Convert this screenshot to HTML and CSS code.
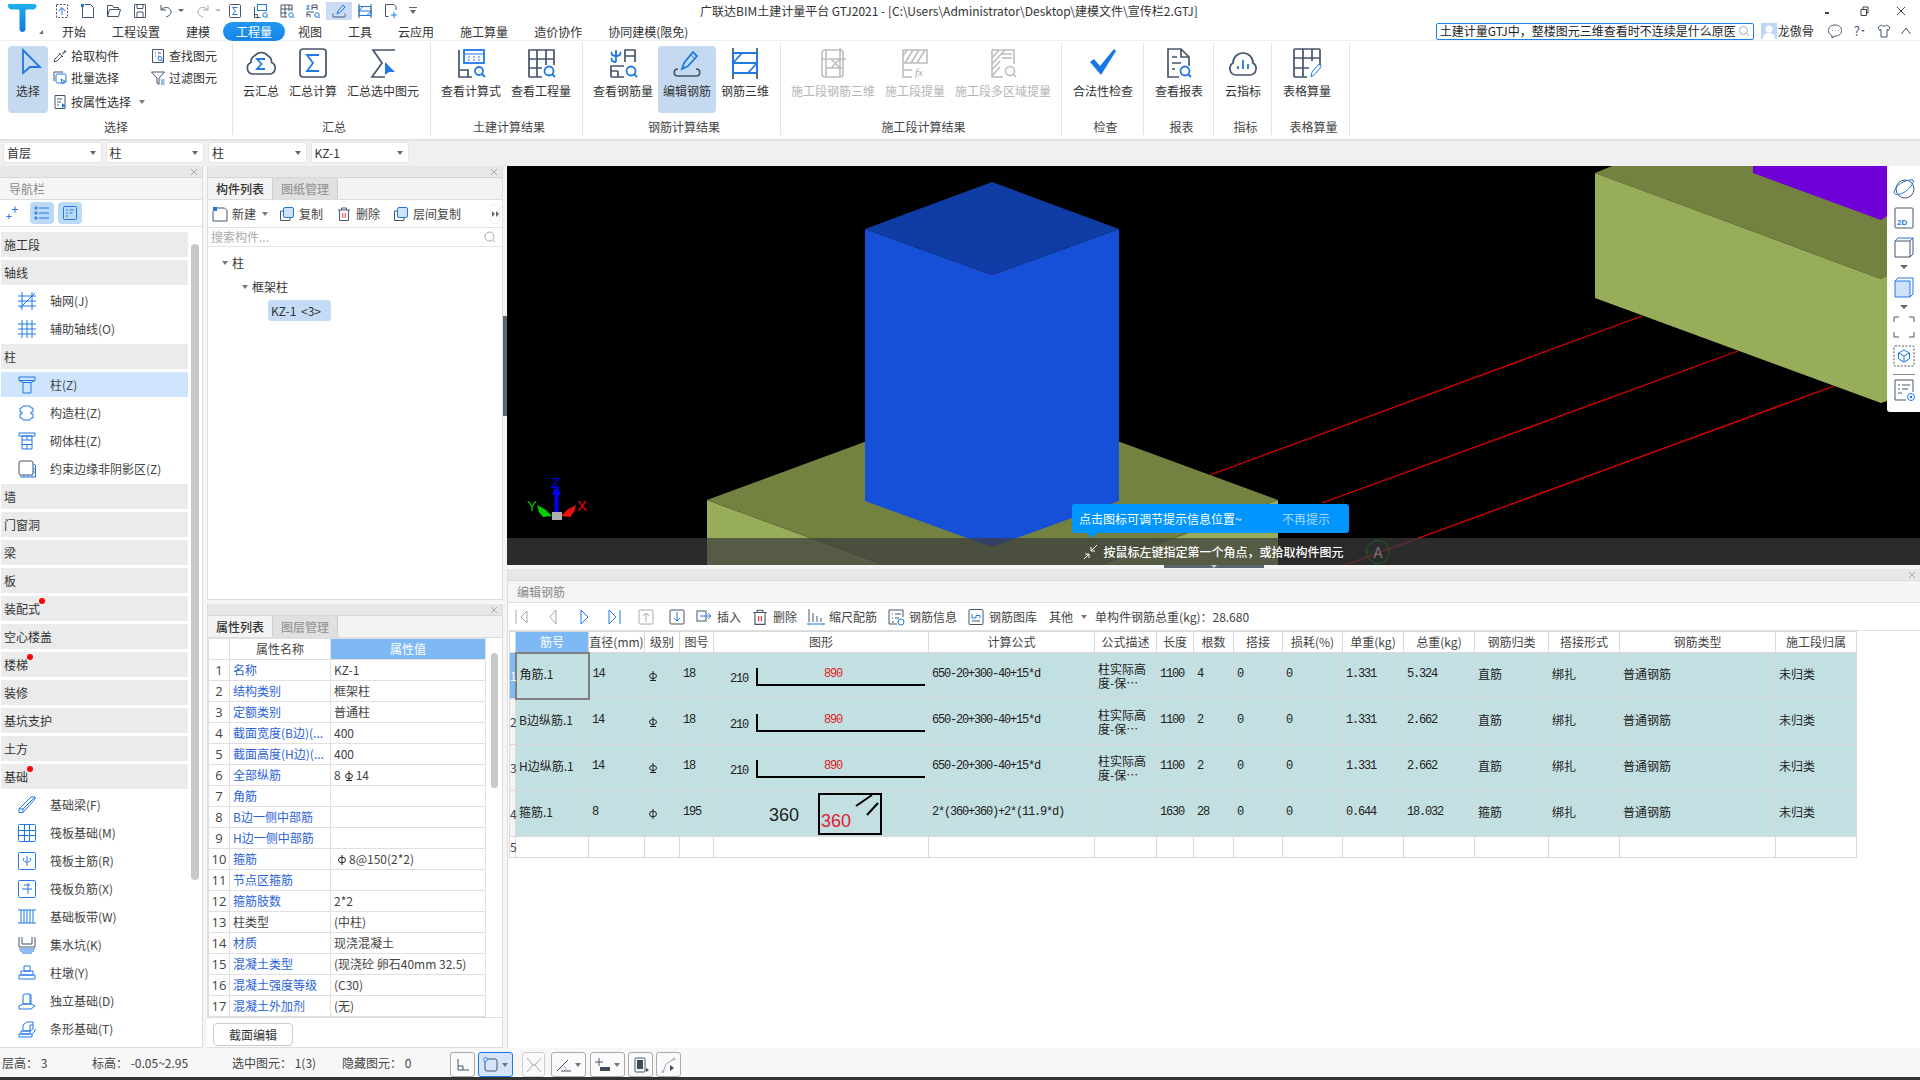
FILE: index.html
```html
<!DOCTYPE html>
<html lang="zh-CN">
<head>
<meta charset="utf-8">
<title>广联达BIM土建计量平台 GTJ2021</title>
<link rel="stylesheet" href="styles.css">
</head>
<body>
<svg class="defs" width="0" height="0">
  <symbol id="trash" viewBox="0 0 16 16"><path class="d" d="M2 4h12M5.500 4V2h5v2M3.500 4v10.500h9V4"/><path class="r" d="M6.800 7v5M9.200 7v5"/></symbol>
  <symbol id="copy" viewBox="0 0 16 16"><path class="d" d="M4 5H1.500v9.500H11V12"/><rect class="bf" x="4.500" y="1.500" width="10" height="10" rx="1.500"/></symbol>
  <symbol id="g3" viewBox="0 0 10 12"><path class="k" d="M5 1v10M2 10.500h6"/><ellipse class="k" cx="5" cy="6" rx="3.500" ry="2.500"/></symbol>
  <symbol id="g1" viewBox="0 0 10 12"><path class="k" d="M5 1v10"/><ellipse class="k" cx="5" cy="6" rx="3.500" ry="2.800"/></symbol>
</svg>
<header class="top">
  <div class="logo-cell">
    <svg width="32" height="30" viewBox="0 0 32 30"><defs><linearGradient id="tg" x1="0" y1="0" x2="0" y2="1"><stop offset="0" stop-color="#1fb1ee"/><stop offset="1" stop-color="#1278e0"/></linearGradient></defs><path fill="url(#tg)" d="M2 1h25c2 0 3 1 2.500 2.500S28 6.500 26 6.500h-6c-1 0-1.500.5-1.500 2v17c0 2-1 3.500-3 3.500s-3-1.500-3-3.500v-17c0-1.500-.5-2-1.500-2H5C3 6.500 1 5 1 3s0-2 1-2z"/></svg>
    <span class="logo-tri"></span>
  </div>
  <div class="top-right">
    <div class="title-row">
      <div class="qa">
        <span class="qs"><svg class="i16" viewBox="0 0 16 16"><rect class="d dash" x="2.500" y="1.500" width="11" height="13"/><path class="bs" d="M8 12V5M5 8l3-3.500L11 8"/></svg></span>
        <span class="qs"><svg class="i16" viewBox="0 0 16 16"><path class="d" d="M5 1.500h5.500l3 3v10h-11V4"/><rect class="bf0" x="1" y="1" width="3" height="3"/></svg></span>
        <span class="qs"><svg class="i16" viewBox="0 0 16 16"><path class="d" d="M1.500 13.500v-11h5l1 2h5v2M1.500 13.500h11l2-7h-11z"/></svg></span>
        <span class="qs"><svg class="i16" viewBox="0 0 16 16"><path class="d" d="M3 1.500h10a.500.500 0 0 1 .500.500v12a.500.500 0 0 1-.500.500H3a.500.500 0 0 1-.500-.500V2a.500.500 0 0 1 .500-.500zM5 1.500v4h6v-4M5 14v-5h6v5"/></svg></span>
        <span class="qs"><svg class="i16" viewBox="0 0 16 16"><path class="d" d="M3 2v5h5M3 7c2-3 9-4 10 1 .5 3-2 5-5 6"/></svg></span>
        <span class="qa-arrow"></span>
        <span class="qs"><svg class="i16" viewBox="0 0 16 16"><path class="g" d="M13 2v5H8M13 7c-2-3-9-4-10 1-.5 3 2 5 5 6"/></svg></span>
        <span class="qa-arrow qa-arrow-g"></span>
        <span class="qs"><svg class="i16" viewBox="0 0 16 16"><rect class="d" x="2.500" y="1.500" width="11" height="13" rx="1"/><path class="bs" d="M10.500 4.500h-5l3 3.500-3 3.500h5"/></svg></span>
        <span class="qs"><svg class="i16" viewBox="0 0 16 16"><path class="d" d="M1.500 4v10.500h6M1.500 11.500h3v3"/><rect class="bs" x="4.500" y="1.500" width="9" height="6"/><circle class="bs" cx="12" cy="12" r="2.200"/><path class="bs" d="M13.500 13.500L15 15"/></svg></span>
        <span class="qs"><svg class="i16" viewBox="0 0 16 16"><path class="d" d="M2 14V2h11v6M6 2v12M10 2v6M2 6h11M2 10h6M2 14h6"/><circle class="bs" cx="12" cy="12" r="2.200"/><path class="bs" d="M13.500 13.500L15 15"/></svg></span>
        <span class="qs"><svg class="i16" viewBox="0 0 16 16"><path class="bs" d="M3 2v5M1.500 3h3M1.500 6h3"/><path class="d" d="M7 7V2h5v5M7 4.500h5M2 14V9h7M2 11.500h3M5 11.500V14"/><circle class="bs" cx="12" cy="12" r="2.200"/><path class="bs" d="M13.500 13.500L15 15"/></svg></span>
        <span class="qs qs-on"><svg class="i16" viewBox="0 0 16 16"><path class="d" d="M3 11c-2 0-2 3 0 3h10c2 0 2-3 0-3"/><path class="bs" d="M6 11l1-3 5-6 2 2-5 5.500z"/></svg></span>
        <span class="qs"><svg class="i16" viewBox="0 0 16 16"><path class="d" d="M2 1v14M14 1v14"/><path class="bs" d="M2 3.500h12v9H2zM2 8h12M2 8l4-4.500M10 12.500l4-4.500"/></svg></span>
        <span class="qs"><svg class="i16" viewBox="0 0 16 16"><path class="d" d="M8 1.500H2.500v12h3M8 1.500h3l2 2V7"/><path class="bs" d="M11 9v6M8 12h6"/></svg></span>
        <span class="qa-more"></span>
      </div>
      <div class="app-title">广联达BIM土建计量平台 GTJ2021 - [C:\Users\Administrator\Desktop\建模文件\宣传栏2.GTJ]</div>
      <div class="win">
        <svg class="i10" viewBox="0 0 10 10"><path class="w2" d="M3 7h4"/></svg>
        <svg class="i10" viewBox="0 0 10 10"><path class="w" d="M2 3.500h5.500v6H2zM4 3.500V1h5v6H7.500"/></svg>
        <svg class="i10" viewBox="0 0 10 10"><path class="w" d="M1 1l8 8M9 1l-8 8"/></svg>
      </div>
    </div>
    <div class="tab-row">
      <nav class="tabs">
        <span class="tab">开始</span><span class="tab">工程设置</span><span class="tab">建模</span><span class="tab tab-on">工程量</span><span class="tab">视图</span><span class="tab">工具</span><span class="tab">云应用</span><span class="tab">施工算量</span><span class="tab">造价协作</span><span class="tab">协同建模(限免)</span>
      </nav>
      <div class="user">
        <div class="search-top"><span class="search-txt">土建计量GTJ中，整楼图元三维查看时不连续是什么原医</span><svg class="i12" viewBox="0 0 12 12"><circle class="g" cx="5.500" cy="5.500" r="4"/><path class="g" d="M8.500 8.500L11 11"/></svg></div>
        <svg class="avatar" viewBox="0 0 16 16"><rect width="16" height="16" fill="#bcd6f6"/><circle cx="8" cy="6" r="3.500" fill="#fff"/><path d="M2 16c0-5 3-6 6-6s6 1 6 6z" fill="#fff"/></svg>
        <span class="uname">龙傲骨</span>
        <svg class="i16 u1" viewBox="0 0 16 16"><path class="d" d="M8 2c4 0 6.500 2 6.500 5.500S12 13 8 13l-3 2v-2.500C2.500 11.500 1.500 10 1.500 7.500 1.500 4 4 2 8 2zM5 7.500h.5M8 7.500h.5M11 7.500h.5"/></svg>
        <span class="help">?<i></i></span>
        <svg class="i16" viewBox="0 0 16 16"><path class="d" d="M5.500 2L2 4.500l1.500 3 1.500-1V14h6V6.500l1.500 1 1.500-3L10.500 2c-1 1.500-4 1.500-5 0z"/></svg>
        <svg class="i12 u2" viewBox="0 0 12 12"><path class="d" d="M1.500 9L6 3l4.500 6"/></svg>
      </div>
    </div>
  </div>
</header>

<section class="ribbon">
  <div class="grp g-select">
    <div class="btns">
      <div class="big big-select on">
        <svg class="i32" viewBox="0 0 32 32"><path class="bs2" d="M11 3v23l7-6 10 0z"/></svg>
        <span>选择</span>
      </div>
      <div class="scol scol1">
        <div class="srow"><svg class="i16" viewBox="0 0 16 16"><path class="d" d="M2 14l1-3 5-5 2 2-5 5zM7 5l4 4"/><path class="dk" d="M10 6l3-4 1.500 1.500-4 3z"/></svg><span>拾取构件</span></div>
        <div class="srow"><svg class="i16" viewBox="0 0 16 16"><path class="d" d="M2 11V2h9"/><rect class="bs" x="4" y="4" width="10" height="9" rx="1.500"/><path class="bs" d="M9 9l1.500 5 1-2 2-.500z"/></svg><span>批量选择</span></div>
        <div class="srow srow-3"><svg class="i16" viewBox="0 0 16 16"><path class="d" d="M3 1.500h10v13H3zM5 5h5M5 8h4M5 11h2"/><path class="bf0" d="M10 9v5l1.500-1.200L14 12z"/></svg><span>按属性选择</span><i class="arw"></i></div>
      </div>
      <div class="scol">
        <div class="srow"><svg class="i16" viewBox="0 0 16 16"><path class="d" d="M2.500 1.500h11v13h-11zM5 5h1M8 5h3M5 8h1M8 8h1"/><circle class="bs" cx="10" cy="10.500" r="2"/><path class="bs" d="M11.500 12l2 2"/></svg><span>查找图元</span></div>
        <div class="srow"><svg class="i16" viewBox="0 0 16 16"><path class="d" d="M1.500 2h13L9 8v6.500L7 13V8z"/><path class="bs" d="M11 10h3.500M11 12h3.500M11 14h3.500"/></svg><span>过滤图元</span></div>
      </div>
    </div>
    <div class="glabel">选择</div>
  </div>

  <div class="grp g-sum">
    <div class="btns">
      <div class="big"><svg class="i32" viewBox="0 0 32 32"><path class="dm" d="M8 27a6 6 0 0 1-2-11.500 7 7 0 0 1 4-7 8 8 0 0 1 12.500 0 7 7 0 0 1 4 7 6 6 0 0 1-2 11.500z"/><path class="bs2" d="M20 12h-8l4.500 5-4.500 5h8"/></svg><span>云汇总</span></div>
      <div class="big"><svg class="i32" viewBox="0 0 32 32"><rect class="dm" x="3" y="2" width="26" height="28" rx="3"/><path class="bs2" d="M22 8H10l6 8-6 8h12"/></svg><span>汇总计算</span></div>
      <div class="big"><svg class="i32" viewBox="0 0 32 32"><path class="dm" d="M28 3H6l9 13-10 14h13"/><path class="bf0" d="M18 15v13l4-3 6 0z"/></svg><span>汇总选中图元</span></div>
    </div>
    <div class="glabel">汇总</div>
  </div>

  <div class="grp g-civil">
    <div class="btns">
      <div class="big"><svg class="i32" viewBox="0 0 32 32"><path class="dm" d="M4 3v27h13M4 23h9v7"/><rect class="bs2" x="9" y="3" width="20" height="13"/><path class="bs" d="M9 7h20M13 10h2M18 10h2M23 10h2M13 13h2M18 13h2M23 13h2"/><circle class="bs2" cx="24" cy="24" r="4"/><path class="bs2" d="M27 27l3 3"/></svg><span>查看计算式</span></div>
      <div class="big"><svg class="i32" viewBox="0 0 32 32"><path class="dm" d="M4 30V3h25v15M4 12h25M4 21h13M4 30h13M12 3v27M21 3v15"/><circle class="bs2" cx="24" cy="24" r="4.500"/><path class="bs2" d="M27 27l3 3"/></svg><span>查看工程量</span></div>
    </div>
    <div class="glabel">土建计算结果</div>
  </div>

  <div class="grp g-rebar">
    <div class="btns">
      <div class="big"><svg class="i32" viewBox="0 0 32 32"><path class="bs2" d="M9 3v12M5 5c-2 3 2 4 4 4s6-1 4-4M5 11c-2 3 2 4 4 4"/><path class="dm" d="M18 15V3h10v12M18 9h10M4 30V19h13M4 24h7M11 24v6M4 30h13"/><circle class="bs2" cx="24" cy="24" r="4.500"/><path class="bs2" d="M27 27l3 3"/></svg><span>查看钢筋量</span></div>
      <div class="big on"><svg class="i32" viewBox="0 0 32 32"><path class="dm" d="M7 22c-5 0-5 7 0 7h18c5 0 5-7 0-7"/><path class="bs2" d="M11 22l2-6L22 5l4 4-9 10z"/><path class="bs" d="M20 8l4 4"/></svg><span>编辑钢筋</span></div>
      <div class="big"><svg class="i32" viewBox="0 0 32 32"><path class="dm" d="M4 1v31M28 1v31"/><path class="bs2" d="M4 6h24v20H4zM4 16h24M4 16l9-10M19 26l9-10"/></svg><span>钢筋三维</span></div>
    </div>
    <div class="glabel">钢筋计算结果</div>
  </div>

  <div class="grp g-stage dis">
    <div class="btns">
      <div class="big"><svg class="i32" viewBox="0 0 32 32"><rect class="gg" x="5" y="3" width="21" height="27" rx="3"/><path class="gg" d="M9 3v27M23 1v29M5 12h24M9 21h17M14 12l9 9M14 21l9-9"/></svg><span>施工段钢筋三维</span></div>
      <div class="big"><svg class="i32" viewBox="0 0 32 32"><path class="gg" d="M4 3h24v13H4zM8 3L4 9M14 3L6 16M20 3l-8 13M26 3l-8 13M4 16v14h9M4 23h9"/><text class="fx" x="16" y="29">fx</text></svg><span>施工段提量</span></div>
      <div class="big"><svg class="i32" viewBox="0 0 32 32"><path class="gg" d="M5 3h22v14M5 3v27h11M12 3L5 11M18 3L5 17M5 23l8-9M5 29l8-9"/><path class="gg" d="M15 7h10M15 11h10"/><circle class="gg" cx="23" cy="24" r="4.500"/><path class="gg" d="M26 27l3 3"/></svg><span>施工段多区域提量</span></div>
    </div>
    <div class="glabel glabel-dk">施工段计算结果</div>
  </div>

  <div class="grp g-check">
    <div class="btns">
      <div class="big"><svg class="i32" viewBox="0 0 32 32"><path fill="#1877e6" d="M3 15l4-3 6 7L27 2l2 2-15 24z"/></svg><span>合法性检查</span></div>
    </div>
    <div class="glabel">检查</div>
  </div>

  <div class="grp g-report">
    <div class="btns">
      <div class="big"><svg class="i32" viewBox="0 0 32 32"><path class="dm" d="M16 30H5V2h13l8 8v9M18 2v8h8M9 10h5M9 16h9M9 22h3"/><circle class="bs2" cx="22" cy="24" r="4.500"/><path class="bs2" d="M25 27l3 3"/></svg><span>查看报表</span></div>
    </div>
    <div class="glabel">报表</div>
  </div>

  <div class="grp g-index">
    <div class="btns">
      <div class="big"><svg class="i32" viewBox="0 0 32 32"><path class="dm" d="M9 28a6.500 6.500 0 0 1-3-12 10 10 0 0 1 20 0 6.500 6.500 0 0 1-3 12z"/><path class="bs2" d="M11 22v-3M16 22v-9M21 22v-5"/></svg><span>云指标</span></div>
    </div>
    <div class="glabel">指标</div>
  </div>

  <div class="grp g-table">
    <div class="btns">
      <div class="big"><svg class="i32" viewBox="0 0 32 32"><path class="dm" d="M3 30V3a1 1 0 0 1 1-1h24a1 1 0 0 1 1 1v15M3 11h26M3 21h15M3 30h13M12 2v28M21 2v12"/><path class="bs" d="M20 30l1-5 7-8 2.500 2.500-7 8z"/></svg><span>表格算量</span></div>
    </div>
    <div class="glabel">表格算量</div>
  </div>
</section>

<section class="combos">
  <div class="combo">首层<i></i></div>
  <div class="combo">柱<i></i></div>
  <div class="combo">柱<i></i></div>
  <div class="combo">KZ-1<i></i></div>
</section>

<main class="main">
  <aside class="left">
    <div class="phead"><svg class="x" viewBox="0 0 8 8"><path d="M1 1l6 6M7 1L1 7"/></svg></div>
    <div class="ptitle">导航栏</div>
    <div class="ltools">
      <svg class="i16" viewBox="0 0 16 16"><path class="bs" d="M10 1.500v6M7 4.500h6M4 9v5M1.500 11.500h5"/></svg>
      <span class="lbtn lbtn-1"><svg class="i16" viewBox="0 0 16 16"><path class="bs" d="M5 3h10M5 8h10M5 13h10M1 2h2v2H1zM1 7h2v2H1zM1 12h2v2H1z"/></svg></span>
      <span class="lbtn"><svg class="i16" viewBox="0 0 16 16"><rect class="bs" x="1.500" y="1.500" width="13" height="13" rx="1"/><path class="bs" d="M4 5h2M7.500 5h4.500M4 8h2M7.500 8h3M4 11h2"/></svg></span>
    </div>
    <div class="nav">
      <div class="sec">施工段</div>
      <div class="sec">轴线</div>
      <div class="it"><svg class="i18" viewBox="0 0 18 18"><path class="bs" d="M0 4h18M0 9h18M0 14h18M4 0v18M14 0v18M2 16L17 1"/></svg>轴网(J)</div>
      <div class="it"><svg class="i18" viewBox="0 0 18 18"><path class="bs" d="M0 4h18M0 9h18M0 14h18M4 0v18M9 0v18M14 0v18"/></svg>辅助轴线(O)</div>
      <div class="sec">柱</div>
      <div class="it it-on"><svg class="i18" viewBox="0 0 18 18"><path class="bs" d="M1 1h16v3.500H1zM1 4.500l4 2v0h8l4-2M5 6.500V17h8V6.500"/></svg>柱(Z)</div>
      <div class="it"><svg class="i18" viewBox="0 0 18 18"><path class="bs" d="M5 2h7l1 2h2v4h-2v2h2v4h-2l-1 2H5l-1-2H2v-4h2V8H2V4h2z"/></svg>构造柱(Z)</div>
      <div class="it"><svg class="i18" viewBox="0 0 18 18"><path class="bs" d="M1 1h16v3H1zM4 4h10v13H4zM4 8h10M4 12.500h10M9 4v4M9 12.500V17"/></svg>砌体柱(Z)</div>
      <div class="it"><svg class="i18" viewBox="0 0 18 18"><rect class="d" x="1" y="1" width="14" height="14" rx="2"/><path class="bs" d="M15.500 4l2 1v12H3l-1-1.500M17 9h-2M17 12h-2M6 17v-2M10 17v-2M14 17v-2"/></svg>约束边缘非阴影区(Z)</div>
      <div class="sec">墙</div>
      <div class="sec">门窗洞</div>
      <div class="sec">梁</div>
      <div class="sec">板</div>
      <div class="sec"><span class="dotted">装配式<b class="dot"></b></span></div>
      <div class="sec">空心楼盖</div>
      <div class="sec"><span class="dotted">楼梯<b class="dot"></b></span></div>
      <div class="sec">装修</div>
      <div class="sec">基坑支护</div>
      <div class="sec">土方</div>
      <div class="sec"><span class="dotted">基础<b class="dot"></b></span></div>
      <div class="it"><svg class="i18" viewBox="0 0 18 18"><path class="bs" d="M1 13L13 1h4v2L5 16.500H1zM1 13h4v3.500M5 13L17 1"/></svg>基础梁(F)</div>
      <div class="it"><svg class="i18" viewBox="0 0 18 18"><rect class="bs" x=".5" y=".5" width="17" height="17" rx="1"/><path class="bs dash2" d="M0 6.500h18M0 11.500h18M6.500 0v18M11.500 0v18"/></svg>筏板基础(M)</div>
      <div class="it"><svg class="i18" viewBox="0 0 18 18"><rect class="bs" x=".5" y=".5" width="17" height="17" rx="1"/><path class="bs" d="M9 4v10M6 6c-2 3 1 4 3 4s5-1 3-4"/></svg>筏板主筋(R)</div>
      <div class="it"><svg class="i18" viewBox="0 0 18 18"><rect class="bs" x=".5" y=".5" width="17" height="17" rx="1"/><path class="bs" d="M4 9h10M6 5h6M10 3v11"/></svg>筏板负筋(X)</div>
      <div class="it"><svg class="i18" viewBox="0 0 18 18"><path class="bs" d="M0 2h18M0 15h18M3 2v13M6 2v13M9 2v13M12 2v13M15 2v13"/></svg>基础板带(W)</div>
      <div class="it"><svg class="i18" viewBox="0 0 18 18"><path class="d" d="M1 1v10h16V1M4 1v7h10V1"/><path class="bs dash3" d="M1 13h16M2 15h14M4 17h10"/></svg>集水坑(K)</div>
      <div class="it"><svg class="i18" viewBox="0 0 18 18"><path class="bs" d="M6 2h6v5H6zM3 7h12v4H3zM1 11h16v4H1z"/></svg>柱墩(Y)</div>
      <div class="it"><svg class="i18" viewBox="0 0 18 18"><path class="bs" d="M5 3l2-1h5v10H5zM12 2l1 1v9M1 14l4-2h8l4 2-4 3H1z"/></svg>独立基础(D)</div>
      <div class="it"><svg class="i18" viewBox="0 0 18 18"><path class="bs" d="M5 5l4-3h6v7l-3 2H5zM12 5h3M12 5v6M3 11h9v3H3zM1 14h13v3H1zM14 14l3-3V9"/></svg>条形基础(T)</div>
    </div>
    <div class="lscroll"></div>
  </aside>

  <div class="mid">
    <div class="comp">
      <div class="phead"><svg class="x" viewBox="0 0 8 8"><path d="M1 1l6 6M7 1L1 7"/></svg></div>
      <div class="ptabs"><span class="ptab on">构件列表</span><span class="ptab">图纸管理</span></div>
      <div class="mtools">
        <span class="mt mt-new"><svg class="i16" viewBox="0 0 16 16"><path class="d" d="M5 2h7.500L15 4.500V15H1V5"/><rect class="bf0" x="1" y="1" width="4" height="4"/></svg>新建<i class="arw"></i></span>
        <span class="mt"><svg class="i16"><use href="#copy"/></svg>复制</span>
        <span class="mt"><svg class="i16"><use href="#trash"/></svg>删除</span>
        <span class="mt"><svg class="i16"><use href="#copy"/></svg>层间复制</span>
        <span class="more"><i></i><i></i></span>
      </div>
      <div class="msearch"><span>搜索构件...</span><svg class="i12" viewBox="0 0 12 12"><circle class="g" cx="5.500" cy="5.500" r="4.500"/><path class="g" d="M9 9l2 2"/></svg></div>
      <div class="tree">
        <div class="t1"><i class="tri"></i>柱</div>
        <div class="t2"><i class="tri"></i>框架柱</div>
        <div class="t3"><span class="pill">KZ-1 &lt;3&gt;</span></div>
      </div>
    </div>
    <div class="props">
      <div class="phead"><svg class="x" viewBox="0 0 8 8"><path d="M1 1l6 6M7 1L1 7"/></svg></div>
      <div class="ptabs"><span class="ptab on">属性列表</span><span class="ptab">图层管理</span></div>
      <div class="ptable-wrap">
        <table class="pt">
          <colgroup><col class="p1"><col class="p2"><col class="p3"></colgroup>
          <thead><tr><th></th><th>属性名称</th><th class="hl">属性值</th></tr></thead>
          <tbody>
            <tr><td class="n">1</td><td class="lk">名称</td><td>KZ-1</td></tr>
            <tr><td class="n">2</td><td class="lk">结构类别</td><td>框架柱</td></tr>
            <tr><td class="n">3</td><td class="lk">定额类别</td><td>普通柱</td></tr>
            <tr><td class="n">4</td><td class="lk">截面宽度(B边)(...</td><td>400</td></tr>
            <tr><td class="n">5</td><td class="lk">截面高度(H边)(...</td><td>400</td></tr>
            <tr><td class="n">6</td><td class="lk">全部纵筋</td><td>8<svg class="sym"><use href="#g3"/></svg>14</td></tr>
            <tr><td class="n">7</td><td class="lk">角筋</td><td></td></tr>
            <tr><td class="n">8</td><td class="lk">B边一侧中部筋</td><td></td></tr>
            <tr><td class="n">9</td><td class="lk">H边一侧中部筋</td><td></td></tr>
            <tr><td class="n">10</td><td class="lk">箍筋</td><td><svg class="sym"><use href="#g1"/></svg>8@150(2*2)</td></tr>
            <tr><td class="n">11</td><td class="lk">节点区箍筋</td><td></td></tr>
            <tr><td class="n">12</td><td class="lk">箍筋肢数</td><td>2*2</td></tr>
            <tr><td class="n">13</td><td>柱类型</td><td>(中柱)</td></tr>
            <tr><td class="n">14</td><td class="lk">材质</td><td>现浇混凝土</td></tr>
            <tr><td class="n">15</td><td class="lk">混凝土类型</td><td>(现浇砼 卵石40mm 32.5)</td></tr>
            <tr><td class="n">16</td><td class="lk">混凝土强度等级</td><td>(C30)</td></tr>
            <tr><td class="n">17</td><td class="lk">混凝土外加剂</td><td>(无)</td></tr>
            <tr><td class="n"></td><td></td><td></td></tr>
          </tbody>
        </table>
        <div class="pscroll"></div>
      </div>
    </div>
    <div class="pfoot"><span class="btn">截面编辑</span></div>
    <div class="splitter"></div>
  </div>

  <div class="right">
    <div class="viewport">
      <svg class="scene" viewBox="507 166 1413 399" width="1413" height="399">
        <path class="red" d="M1210 475L1642 316M1322 503L1738 351M1345 565L1834 386"/>
        <polygon fill="#98ad5a" points="707,500 992,605 1278,500 1278,565 707,565"/>
        <polygon fill="#738240" points="707,500 992,395 1278,500 992,605"/>
        <polygon fill="#1650d8" points="865,229 992,275 1119,229 1119,501 992,547 865,501"/>
        <polygon fill="#103ca6" points="865,229 992,182 1119,229 992,275"/>
        <polygon fill="#738240" points="1612,166 1887,166 1887,276 1881,279 1595,173"/>
        <polygon fill="#98ad5a" points="1595,173 1881,279 1887,276 1887,401 1881,403 1595,298"/>
        <polygon fill="#6f00d8" points="1753,166 1887,166 1887,216 1881,220 1753,173"/>
        <path class="axis-b" d="M556.500 512V492"/>
        <polygon fill="#0000f0" points="552,495 556.500,484 561,495"/>
        <polygon fill="#00d000" points="552,516 546,510 537,505 539,512 543,517"/>
        <polygon fill="#f01010" points="561,516 567,510 576,505 574,512 570,517"/>
        <rect x="552" y="512" width="10" height="8" fill="#b0b0b0"/>
        <text class="ax" x="551" y="488" fill="#0000f0">Z</text>
        <text class="ax" x="527" y="511" fill="#00c000">Y</text>
        <text class="ax" x="577" y="511" fill="#f00000">X</text>
      </svg>
      <div class="hint-bar">
        <svg class="i16" viewBox="0 0 16 16"><path class="w3" d="M8 7l6-6M8 7V3M8 7h4M1 15l5-5M6 10v4M6 10H2"/></svg>
        <span>按鼠标左键指定第一个角点，或拾取构件图元</span>
        <span class="a-mark">A</span>
      </div>
      <div class="tip"><span>点击图标可调节提示信息位置~</span><span class="tip-off">不再提示</span></div>
      <div class="vtools">
        <svg class="i22" viewBox="0 0 22 22"><circle class="d" cx="12" cy="11" r="9"/><path class="bs" d="M1 15C1 8 12 1 20 2c2 2-4 10-10 13-4 2-8 2-9 0z"/></svg>
        <svg class="i22" viewBox="0 0 22 22"><rect class="d" x="2" y="1" width="18" height="20" rx="1"/><text class="t2d" x="4" y="18">2D</text></svg>
        <svg class="i22" viewBox="0 0 22 22"><path class="d" d="M2 5h15v16H2zM17 21l3-3V2"/><path class="bs" d="M2 5l3-3h15l-3 3"/></svg>
        <i class="vdown"></i>
        <svg class="i22" viewBox="0 0 22 22"><path fill="#cfe2fa" stroke="#1f78e6" d="M2 5h15v16H2z"/><path class="bs" d="M2 5l3-3h15v16l-3 3"/></svg>
        <i class="vdown"></i>
        <svg class="i22" viewBox="0 0 22 22"><path class="d" d="M1 6V1h5M16 1h5v5M21 16v5h-5M6 21H1v-5"/></svg>
        <svg class="i22" viewBox="0 0 22 22"><rect class="d dash" x="1" y="1" width="20" height="20" rx="1"/><path class="bs" d="M11 5l5.500 3v6L11 17l-5.500-3V8zM5.500 8L11 11l5.500-3M11 11v6"/></svg>
        <hr class="vsep">
        <svg class="i22" viewBox="0 0 22 22"><path class="d" d="M13 21H2V1h18v12M5 6h2M9 6h8M5 10h2M9 10h6M5 14h4"/><circle class="bs" cx="18" cy="18" r="3.500"/><circle cx="18" cy="18" r="1.300" fill="#1f78e6"/></svg>
      </div>
    </div>
    <div class="vhandle"><i></i></div>
    <div class="rebar">
      <div class="phead"><svg class="x" viewBox="0 0 8 8"><path d="M1 1l6 6M7 1L1 7"/></svg></div>
      <div class="ptitle">编辑钢筋</div>
      <div class="rtools">
        <div class="rnav">
          <svg class="i18" viewBox="0 0 18 18"><path class="g" d="M3 2v14M14 3L8 9l6 6z"/></svg>
          <svg class="i18" viewBox="0 0 18 18"><path class="g" d="M12 2L6 9l6 7z"/></svg>
          <svg class="i18" viewBox="0 0 18 18"><path class="bs" d="M6 2l7 7-7 7z"/></svg>
          <svg class="i18" viewBox="0 0 18 18"><path class="bs" d="M3 2l7 7-7 7zM14 2v14"/></svg>
          <svg class="i18" viewBox="0 0 18 18"><rect class="g" x="2" y="2" width="14" height="14" rx="1"/><path class="g" d="M9 14V5M6 8l3-3 3 3"/></svg>
          <svg class="i18" viewBox="0 0 18 18"><rect class="d" x="2" y="2" width="14" height="14" rx="1"/><path class="bs" d="M9 4v9M6 10l3 3 3-3"/></svg>
        </div>
        <span class="rt"><svg class="i18" viewBox="0 0 18 18"><rect class="d" x="2" y="3" width="9" height="10"/><path class="bs" d="M5 8h11M13 5l3 3-3 3"/></svg>插入</span>
        <span class="rt"><svg class="i18"><use href="#trash"/></svg>删除</span>
        <span class="rt"><svg class="i18" viewBox="0 0 18 18"><path class="d" d="M2 1v13M6 5v9M10 8v6M14 10v4"/><path class="bs" d="M1 16h16M1 15v2M17 15v2"/></svg>缩尺配筋</span>
        <span class="rt"><svg class="i18" viewBox="0 0 18 18"><path class="d" d="M10 16H2V2h14v7M5 6h1M8 6h6M5 10h1M8 10h4M5 14h2"/><circle class="bs" cx="14" cy="14" r="3"/></svg>钢筋信息</span>
        <span class="rt"><svg class="i18" viewBox="0 0 18 18"><rect class="d" x="2" y="1.500" width="14" height="15" rx="1"/><path class="d" d="M5 13h8"/><path class="bs" d="M5 6v4h4M9 10V7.500h4V10"/></svg>钢筋图库</span>
        <span class="rt rt-other">其他<i class="arw"></i></span>
        <span class="rt-total">单构件钢筋总重(kg)：28.680</span>
      </div>
      <div class="rb-wrap">
        <table class="rb">
          <colgroup><col><col><col><col><col><col><col><col><col><col><col><col><col><col><col><col><col><col></colgroup>
          <thead><tr>
            <th></th><th class="hl">筋号</th><th>直径(mm)</th><th>级别</th><th>图号</th><th>图形</th><th>计算公式</th><th>公式描述</th><th>长度</th><th>根数</th><th>搭接</th><th>损耗(%)</th><th>单重(kg)</th><th>总重(kg)</th><th>钢筋归类</th><th>搭接形式</th><th>钢筋类型</th><th>施工段归属</th>
          </tr></thead>
          <tbody>
            <tr class="rw"><td class="gut gut-on">1</td><td class="sel">角筋.1</td><td class="m">14</td><td><svg class="sym2"><use href="#g3"/></svg></td><td class="m">18</td>
              <td class="shape"><svg class="fig" viewBox="0 0 215 45"><text class="f210" x="16" y="29">210</text><path class="bar" d="M43 15v17h168"/><text class="f890" x="110" y="24">890</text></svg></td>
              <td class="m">650-20+300-40+15*d</td><td class="w">柱实际高<br>度-保…</td><td class="m">1100</td><td class="m">4</td><td class="m">0</td><td class="m">0</td><td class="m">1.331</td><td class="m">5.324</td><td class="c">直筋</td><td class="c">绑扎</td><td class="c">普通钢筋</td><td class="c">未归类</td></tr>
            <tr class="rw"><td class="gut">2</td><td>B边纵筋.1</td><td class="m">14</td><td><svg class="sym2"><use href="#g3"/></svg></td><td class="m">18</td>
              <td class="shape"><svg class="fig" viewBox="0 0 215 45"><text class="f210" x="16" y="29">210</text><path class="bar" d="M43 15v17h168"/><text class="f890" x="110" y="24">890</text></svg></td>
              <td class="m">650-20+300-40+15*d</td><td class="w">柱实际高<br>度-保…</td><td class="m">1100</td><td class="m">2</td><td class="m">0</td><td class="m">0</td><td class="m">1.331</td><td class="m">2.662</td><td class="c">直筋</td><td class="c">绑扎</td><td class="c">普通钢筋</td><td class="c">未归类</td></tr>
            <tr class="rw"><td class="gut">3</td><td>H边纵筋.1</td><td class="m">14</td><td><svg class="sym2"><use href="#g3"/></svg></td><td class="m">18</td>
              <td class="shape"><svg class="fig" viewBox="0 0 215 45"><text class="f210" x="16" y="29">210</text><path class="bar" d="M43 15v17h168"/><text class="f890" x="110" y="24">890</text></svg></td>
              <td class="m">650-20+300-40+15*d</td><td class="w">柱实际高<br>度-保…</td><td class="m">1100</td><td class="m">2</td><td class="m">0</td><td class="m">0</td><td class="m">1.331</td><td class="m">2.662</td><td class="c">直筋</td><td class="c">绑扎</td><td class="c">普通钢筋</td><td class="c">未归类</td></tr>
            <tr class="rw"><td class="gut">4</td><td>箍筋.1</td><td class="m">8</td><td><svg class="sym2"><use href="#g1"/></svg></td><td class="m">195</td>
              <td class="shape"><svg class="fig" viewBox="0 0 215 45"><text class="f360" x="55" y="30">360</text><rect class="bar" x="105" y="3" width="62" height="40"/><path class="bar" d="M142 15l16-11M153 24l11-12"/><text class="f360r" x="107" y="36">360</text></svg></td>
              <td class="m">2*(360+360)+2*(11.9*d)</td><td></td><td class="m">1630</td><td class="m">28</td><td class="m">0</td><td class="m">0</td><td class="m">0.644</td><td class="m">18.032</td><td class="c">箍筋</td><td class="c">绑扎</td><td class="c">普通钢筋</td><td class="c">未归类</td></tr>
            <tr class="e"><td class="gut">5</td><td></td><td></td><td></td><td></td><td></td><td></td><td></td><td></td><td></td><td></td><td></td><td></td><td></td><td></td><td></td><td></td><td></td></tr>
          </tbody>
        </table>
      </div>
    </div>
  </div>
</main>

<footer class="status">
  <span class="st st1">层高： 3</span>
  <span class="st st2">标高： -0.05~2.95</span>
  <span class="st st3">选中图元： 1(3)</span>
  <span class="st st4">隐藏图元： 0</span>
  <div class="stools">
    <span class="sb sb-s"><svg class="i16" viewBox="0 0 16 16"><path class="d" d="M3 2v11h11M3 9h5v4"/></svg></span>
    <span class="sb sb-w sb-on"><svg class="i16" viewBox="0 0 16 16"><rect class="d" x="2" y="2" width="12" height="12" rx="2"/><circle cx="2.500" cy="2.500" r="1.800" fill="#fff" stroke="#1f78e6"/></svg><i class="arw"></i></span>
    <span class="sb sb-x m9"><svg class="i16" viewBox="0 0 16 16"><path class="g" d="M1 1l6 7-6 7M15 1L9 8l6 7M7 8h2"/></svg></span>
    <span class="sb sb-w m6"><svg class="i16" viewBox="0 0 16 16"><path class="d" d="M1 14L12 3M5 14h10"/><path class="g" d="M8 9a6 6 0 0 1 2 5"/></svg><i class="arw"></i></span>
    <span class="sb sb-w m4"><svg class="i16" viewBox="0 0 16 16"><path class="d" d="M4 1v8M0 5h8"/><rect x="5" y="10" width="10" height="4" fill="#3d4b5f"/></svg><i class="arw"></i></span>
    <span class="sb sb-s"><svg class="i16" viewBox="0 0 16 16"><rect class="d" x="2" y="1" width="10" height="14" rx="1"/><rect x="4" y="3" width="6" height="9" fill="#3d4b5f"/><path fill="#3d4b5f" d="M13 11l3 2-3 2z"/></svg></span>
    <span class="sb sb-s"><svg class="i16" viewBox="0 0 16 16"><path class="g" d="M2 15l3-8 8-5"/><circle class="g" cx="13" cy="2" r="1"/><circle class="g" cx="2" cy="15" r="1"/><path fill="#3d4b5f" d="M9 8v6l4-3z"/></svg></span>
  </div>
</footer>
<div class="strip"></div>
</body>
</html>
```

FILE: styles.css
```css
* { box-sizing: border-box; }
html, body { margin: 0; height: 100%; }
body {
  width: 1920px; height: 1080px; overflow: hidden;
  display: flex; flex-direction: column;
  background: #fff; color: #333;
  font: 12px/16px "Noto Sans CJK SC", "Liberation Sans", sans-serif;
}
.defs { position: absolute; }
svg { display: block; flex: none; fill: none; }
i { display: block; font-style: normal; }

.d, .dash { stroke: #45556c; stroke-width: 1; fill: none; }
.dash { stroke-dasharray: 2 1.5; }
.dk { fill: #45556c; }
.dm { stroke: #45556c; stroke-width: 1.700; fill: none; }
.bs { stroke: #1f78e6; stroke-width: 1; fill: none; }
.bs2 { stroke: #1f78e6; stroke-width: 1.800; fill: none; }
.bf { stroke: #1f78e6; fill: #cfe2fa; }
.bf0 { fill: #1f78e6; }
.g { stroke: #a3a9b1; stroke-width: 1; fill: none; }
.gg { stroke: #bdbdbd; stroke-width: 1.600; fill: none; }
.r { stroke: #e43030; stroke-width: 1; fill: none; }
.k { stroke: #222; stroke-width: 1; fill: none; }
.w { stroke: #444; stroke-width: 1; fill: none; }
.w2 { stroke: #444; stroke-width: 2; }
.w3 { stroke: #fff; stroke-width: 1; fill: none; }
.fx { fill: #aaa; font: italic 11px "Liberation Serif", serif; }
.i10 { width: 10px; height: 10px; }
.i12 { width: 12px; height: 12px; }
.i16 { width: 16px; height: 16px; }
.i18 { width: 18px; height: 18px; }
.i22 { width: 22px; height: 22px; }
.i32 { width: 32px; height: 32px; }
.arw { width: 0; height: 0; border: 3px solid transparent; border-top: 4px solid #777; border-bottom: 0; flex: none; }

/* top */
.top { display: grid; grid-template-columns: 49px 1fr; height: 41px; border-bottom: 1px solid #eee; }
.logo-cell { padding: 3px 0 0 7px; position: relative; }
.logo-tri { position: absolute; left: 39px; top: 30px; border: 2px solid transparent; border-right-color: #666; border-bottom-color: #666; }
.top-right { display: flex; flex-direction: column; }
.title-row { display: grid; grid-template-columns: 651px auto 1fr; height: 21px; margin-bottom: 1px; align-items: center; }
.qa { display: flex; align-items: center; }
.qs { width: 26px; height: 18px; display: flex; align-items: center; justify-content: center; }
.qs-on { background: #c9dcf3; }
.qa-arrow { flex: none; width: 0; height: 0; border-left: 3px solid transparent; border-right: 3px solid transparent; border-top: 3px solid #666; margin-left: -1px; margin-right: 6px; }
.qa-arrow-g { border-top-color: #bbb; margin-right: 1px; }
.qa-more { width: 8px; height: 7px; border-top: 1px solid #666; position: relative; margin-left: 5px; }
.qa-more::after { content: ""; position: absolute; left: 1px; top: 2px; border: 3px solid transparent; border-top: 4px solid #666; border-bottom: 0; }
.app-title { white-space: nowrap; color: #333; }
.win { display: flex; justify-content: flex-end; gap: 27px; padding-right: 14px; }
.tab-row { display: flex; height: 18px; align-items: center; }
.tabs { display: flex; height: 19px; }
.tab { padding: 0 13px; line-height: 19px; white-space: nowrap; }
.tab-on { background: linear-gradient(#2198f2, #1684ea); color: #fff; border-radius: 10px; }
.user { margin-left: auto; display: flex; align-items: center; padding-right: 8px; }
.search-top { width: 318px; height: 17px; border: 1px solid #1a84ea; border-radius: 2px; display: flex; align-items: center; justify-content: space-between; padding: 0 3px; overflow: hidden; color: #222; }
.search-txt { white-space: nowrap; overflow: hidden; width: 296px; }
.avatar { width: 16px; height: 16px; margin-left: 7px; }
.uname { margin: 0 13px 0 1px; white-space: nowrap; }
.help { font-size: 13px; margin: 0 16px 0 11px; position: relative; color: #45556c; }
.help i { position: absolute; right: -5px; top: 7px; border: 2px solid transparent; border-top-color: #666; }
.u2 { margin-left: 8px; }

/* ribbon */
.ribbon { display: flex; height: 100px; padding-top: 2px; border-bottom: 2px solid #e2e2e2; }
.grp { display: flex; flex-direction: column; height: 92px; border-right: 1px solid #e4e4e4; }
.btns { display: flex; height: 70px; padding-top: 3px; }
.glabel { line-height: 16px; padding-top: 6px; text-align: center; color: #444; white-space: nowrap; }
.glabel-dk { color: #444; }
.big { display: flex; flex-direction: column; align-items: center; padding: 1px 5px 0; height: 67px; border-radius: 4px; white-space: nowrap; }
.big span { margin-top: 4px; }
.big.on { background: #c5daf1; }
.dis .big span { color: #b5b5b5; }
.g-select { width: 233px; }
.big-select { width: 40px; margin-left: 8px; padding: 1px 0 0; }
.scol { display: flex; flex-direction: column; gap: 2px; }
.scol1 { width: 98px; margin-left: 4px; }
.srow { display: flex; align-items: center; gap: 3px; height: 20px; white-space: nowrap; }
.srow-3 { margin-top: 2px; }
.srow .arw { margin-left: 5px; }
.g-sum { width: 198px; padding-left: 5px; }
.g-civil { width: 152px; padding-left: 5px; }
.g-rebar { width: 198px; padding-left: 5px; }
.g-stage { width: 281px; padding-left: 5px; }
.g-check { width: 82px; padding-left: 6px; }
.g-report { width: 70px; padding-left: 6px; }
.g-index { width: 58px; padding-left: 6px; }
.g-table { width: 78px; padding-left: 6px; }

.combos { display: flex; gap: 4px; height: 25px; padding: 1px 3px 0; background: #f0f0f0; }
.combo { width: 98.500px; height: 21px; background: #fff; border: 1px solid #e4e4e4; border-radius: 3px; padding-left: 3px; line-height: 19px; display: flex; justify-content: space-between; align-items: center; padding-right: 5px; }
.combo i { border: 3px solid transparent; border-top: 4px solid #666; border-bottom: 0; }

/* main */
.main { display: flex; height: 882px; background: #f5f5f5; }
.phead { height: 12px; background: #e7e7e7; border-bottom: 1px solid #d8d8d8; display: flex; justify-content: flex-end; align-items: center; padding-right: 4px; }
.x { width: 8px; height: 8px; }
.x path { stroke: #aaa; stroke-width: 1; }
.ptitle { height: 22px; background: #f5f5f5; border-bottom: 1px solid #ddd; color: #888; padding: 2px 0 0 9px; line-height: 18px; }

.left { width: 203px; border-right: 1px solid #ddd; border-bottom: 1px solid #ddd; background: #fff; position: relative; overflow: hidden; display: flex; flex-direction: column; }
.ltools { height: 27px; display: flex; align-items: center; border-bottom: 1px solid #ddd; padding-left: 5px; }
.lbtn { width: 24px; height: 22px; background: #bcd9f6; border-radius: 4px; display: flex; align-items: center; justify-content: center; margin-left: 4px; }
.lbtn-1 { margin-left: 9px; }
.nav { padding: 5px 0 0 1px; display: flex; flex-direction: column; gap: 3px; width: 188px; overflow: hidden; flex: 1; }
.sec, .it { flex: none; height: 25px; line-height: 25px; }
.sec { background: #ebebeb; padding-left: 3px; }
.it { display: flex; align-items: center; padding-left: 17px; color: #444; white-space: nowrap; }
.it svg { margin-right: 14px; }
.it-on { background: #cfe4fd; }
.dotted { position: relative; display: inline-block; }
.dot { position: absolute; right: -5px; top: 2px; width: 6px; height: 6px; border-radius: 50%; background: #f00; }
.lscroll { position: absolute; left: 191px; top: 78px; width: 8px; height: 636px; background: #c8c8c8; border-radius: 4px; }

.mid { width: 304px; margin-left: 0; padding: 0 4px; position: relative; display: flex; flex-direction: column; }
.comp { height: 434px; border: 1px solid #ddd; border-top: 0; background: #fff; display: flex; flex-direction: column; }
.ptabs { display: flex; height: 22px; background: #f3f3f3; border-bottom: 1px solid #ddd; }
.ptab { width: 65px; background: #e0e0e0; color: #999; text-align: center; line-height: 22px; font-weight: 500; margin-left: 0; border-right: 1px solid #d0d0d0; }
.ptab.on { background: #f3f3f3; color: #333; }
.mtools { height: 28px; display: flex; align-items: center; padding-left: 4px; border-bottom: 1px solid #e4e4e4; position: relative; color: #444; }
.mt { display: flex; align-items: center; gap: 4px; margin-right: 13px; white-space: nowrap; }
.mt-new { margin-right: 11px; }
.mt-new .arw { margin-left: 2px; }
.more { position: absolute; right: 2px; top: 4px; width: 10px; height: 20px; border: 1px solid #eee; border-radius: 3px; display: flex; align-items: center; justify-content: center; }
.more i { border: 3px solid transparent; border-left: 3px solid #666; border-right: 0; margin-left: 1px; }
.msearch { height: 19px; display: flex; justify-content: space-between; align-items: center; padding: 0 6px 0 3px; border-bottom: 1px solid #e4e4e4; color: #aaa; }
.tree { padding-top: 4px; }
.t1, .t2 { height: 24px; line-height: 24px; display: flex; align-items: center; }
.t1 { padding-left: 14px; }
.t2 { padding-left: 34px; }
.tri { border: 3px solid transparent; border-top: 4px solid #777; border-bottom: 0; margin-right: 4px; }
.t3 { padding: 1px 0 0 60px; }
.pill { display: inline-block; width: 63px; height: 21px; background: #c5daf5; border-radius: 3px; line-height: 21px; padding-left: 3px; white-space: pre; word-spacing: 2px; }

.props { margin-top: 4px; height: 414px; border: 1px solid #ddd; border-top: 0; background: #fff; display: flex; flex-direction: column; }
.ptable-wrap { flex: 1; overflow: hidden; position: relative; }
.pt { border-collapse: collapse; table-layout: fixed; width: 277px; }
.p1 { width: 21px; } .p2 { width: 101px; } .p3 { width: 155px; }
.pt th, .pt td { height: 21px; border: 1px solid #e0e0e0; padding: 0 0 0 3px; font-weight: 400; white-space: nowrap; overflow: hidden; color: #444; line-height: 18px; }
.pt th { text-align: center; padding: 0; }
.pt th.hl { background: #7fb9f5; color: #fff; }
.pt .n { text-align: center; padding: 0; font-size: 13px; font-family: "Open Sans", sans-serif; }
.pt .lk { color: #2a62d8; }
.sym { display: inline-block; width: 10px; height: 12px; margin: 0 2px 2px 3px; vertical-align: middle; }
.pscroll { position: absolute; left: 283px; top: 15px; width: 7px; height: 135px; background: #c8c8c8; border-radius: 4px; }
.pfoot { height: 30px; background: #fff; padding: 5px 0 0 6px; border-right: 1px solid #ddd; border-bottom: 1px solid #ddd; margin: 0; }
.btn { display: block; width: 80px; height: 23px; border: 1px solid #ccc; border-radius: 4px; text-align: center; line-height: 21px; }
.splitter { position: absolute; right: 0; top: 150px; width: 4px; height: 100px; background: #5a6570; }

.right { flex: 1; display: flex; flex-direction: column; position: relative; min-width: 0; }
.viewport { height: 399px; background: #000; position: relative; overflow: hidden; }
.scene { position: absolute; left: 0; top: 0; }
.red { stroke: #e00000; stroke-width: 1.300; fill: none; }
.axis-b { stroke: #0000f0; stroke-width: 4; }
.ax { font: 15px "Liberation Sans", sans-serif; }
.hint-bar { position: absolute; left: 0; right: 0; bottom: 0; height: 27px; background: rgba(60, 60, 60, .72); color: #fff; display: flex; align-items: center; justify-content: center; gap: 4px; font-weight: 500; }
.a-mark { position: absolute; left: 859px; top: 2px; width: 24px; height: 24px; border: 1px solid #1f5f1f; border-radius: 50%; color: #777; text-align: center; line-height: 22px; font-size: 15px; font-weight: 400; }
.tip { position: absolute; left: 565px; top: 338px; width: 277px; height: 29px; background: #0095ff; border-radius: 3px; color: #fff; display: flex; align-items: center; justify-content: space-between; padding: 0 19px 0 7px; }
.tip::after { content: ""; position: absolute; left: 15px; bottom: -5px; border: 5px solid transparent; border-top: 5px solid #0095ff; border-bottom: 0; }
.tip-off { color: #a6d8ff; }
.vtools { position: absolute; right: 0; top: 0; width: 33px; height: 246px; background: #fff; border-radius: 0 0 0 3px; display: flex; flex-direction: column; align-items: center; padding-top: 12px; gap: 7px; }
.vdown { border: 4px solid transparent; border-top: 4px solid #666; border-bottom: 0; }
.vsep { width: 22px; margin: 0 0 -3px; border: 0; border-top: 1px solid #888; }
.t2d { font: 700 8px "Liberation Sans", sans-serif; fill: #1f78e6; }
.vhandle { position: absolute; left: 657px; top: 399px; width: 100px; height: 3px; background: #5a6570; }
.vhandle i { position: absolute; left: 47px; top: 0; border: 3px solid transparent; border-top: 3px solid #ccc; border-bottom: 0; }

.rebar { margin-top: 4px; height: 479px; border-left: 1px solid #ddd; background: #fff; display: flex; flex-direction: column; }
.rtools { height: 28px; display: flex; align-items: center; padding-left: 5px; border-bottom: 1px solid #e0e0e0; color: #444; white-space: nowrap; }
.rnav { display: flex; gap: 13px; margin-right: 9px; }
.rt { display: flex; align-items: center; gap: 4px; margin-right: 10px; }
.rt-other { margin-left: 2px; margin-right: 6px; }
.rt-other .arw { margin-left: 4px; }
.rt-total { margin-left: 2px; }
.rb { border-collapse: collapse; table-layout: fixed; width: 1347px; margin-left: 1px; }
.rb col:nth-child(1) { width: 6px; }
.rb col:nth-child(2) { width: 73px; }
.rb col:nth-child(3) { width: 56px; }
.rb col:nth-child(4) { width: 35px; }
.rb col:nth-child(5) { width: 34px; }
.rb col:nth-child(6) { width: 215px; }
.rb col:nth-child(7) { width: 166px; }
.rb col:nth-child(8) { width: 62px; }
.rb col:nth-child(9) { width: 37px; }
.rb col:nth-child(10) { width: 40px; }
.rb col:nth-child(11) { width: 49px; }
.rb col:nth-child(12) { width: 60px; }
.rb col:nth-child(13) { width: 61px; }
.rb col:nth-child(14) { width: 71px; }
.rb col:nth-child(15) { width: 74px; }
.rb col:nth-child(16) { width: 71px; }
.rb col:nth-child(17) { width: 156px; }
.rb col:nth-child(18) { width: 81px; }
.rb th, .rb td { border: 1px solid #d9d9d9; padding: 0 0 0 3px; font-weight: 400; white-space: nowrap; overflow: hidden; color: #222; }
.rb th { height: 21px; text-align: center; padding: 0; color: #444; }
.rb th.hl { background: #7fb9f5; color: #fff; }
.rb tr.rw td { height: 46px; background: #c2dfe1; }
.rb tr.rw td:nth-child(2) { padding-bottom: 4px; }
.rb tr.e td { height: 21px; background: #fff; }
.rb td.gut { background: #fff; padding: 0; color: #444; overflow: visible; }
.rb tr.rw td.gut { background: #f4f4f4; }
.rb tr.rw td.gut-on { background: #7fb9f5; color: #fff; }
.rb td.sel { border: 2px solid #808080; }
.rb td.m { font: 12px/14px "Liberation Mono", monospace; letter-spacing: -1.200px; padding-bottom: 4px; }
.rb td.c { padding-bottom: 4px; font-size: 12px; }
.rb td.w { line-height: 14px; }
.rb td.shape { padding: 0; }
.sym2 { width: 10px; height: 12px; margin: 0; }
.fig { width: 215px; height: 45px; }
.bar { stroke: #000; stroke-width: 2; fill: none; }
.f210 { font: 12px "Liberation Mono", monospace; fill: #222; letter-spacing: -1.200px; }
.f890 { font: 12px "Liberation Mono", monospace; fill: #e02020; letter-spacing: -1.200px; }
.f360 { font: 18px "Liberation Sans", sans-serif; fill: #222; }
.f360r { font: 18px "Liberation Sans", sans-serif; fill: #e02030; }

.status { height: 29px; display: flex; align-items: center; background: #f7f7f7; white-space: nowrap; padding-left: 2px; color: #444; }
.st1 { width: 90px; } .st2 { width: 140px; } .st3 { width: 110px; } .st4 { width: 108px; }
.stools { display: flex; gap: 3px; height: 25px; margin-top: 4px; }
.sb { border: 1px solid #aaa; border-radius: 3px; display: flex; align-items: center; justify-content: center; gap: 3px; background: #fafafa; }
.sb-s { width: 25px; }
.sb-x { width: 23px; border-color: #ccc; }
.sb-w { width: 35px; }
.sb-on { background: #d4e5f9; border-color: #1f78e6; }
.m9 { margin-left: 6px; } .m6 { margin-left: 3px; } .m4 { margin-left: 1px; }
.strip { height: 3px; background: #333; }
```
